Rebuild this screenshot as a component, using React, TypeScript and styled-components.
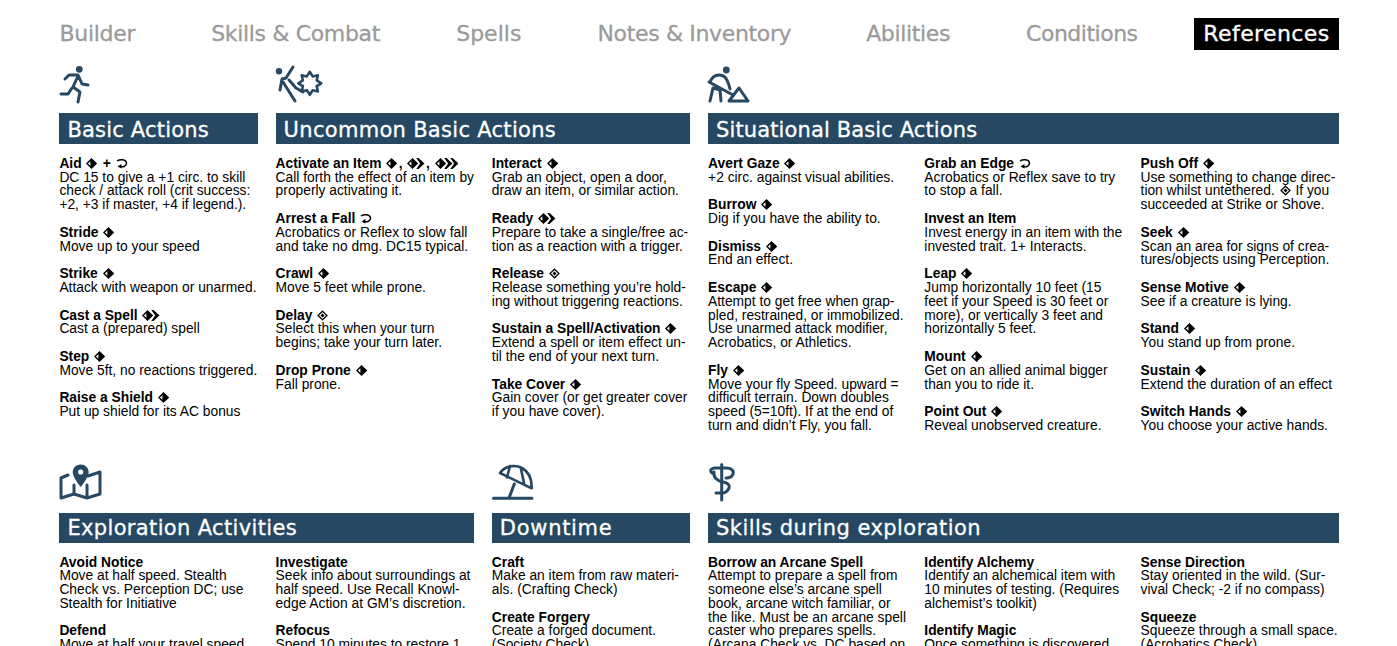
import React from 'react';
import styled, { createGlobalStyle } from 'styled-components';

const NAVY = '#264863';

const Global = createGlobalStyle`
  html, body { margin: 0; padding: 0; background: #fff; }
  body { height: 646px; overflow: hidden; font-family: "Liberation Sans", Arial, sans-serif; color: #000; }
`;

const Page = styled.div`
  width: 1279.6px;
  margin-left: 59.4px;
  padding-top: 18px;
`;

const Nav = styled.nav`
  display: flex;
  align-items: center;
  height: 32px;
  margin-bottom: 14px;
`;

const NavItem = styled.div<{ $active?: boolean; $w: number; $ls: number }>`
  box-sizing: border-box;
  flex: none;
  width: ${p => p.$w}px;
  height: 32px;
  margin-left: ${p => (p.$active ? 'auto' : '0')};
  margin-right: ${p => (p.$active ? '0' : '75.7px')};
  &:nth-last-child(2) { margin-right: 0; }
  line-height: 31px;
  text-align: center;
  white-space: nowrap;
  font-family: "DejaVu Sans", sans-serif;
  font-size: 22px;
  letter-spacing: ${p => p.$ls}px;
  -webkit-text-stroke: 0.3px currentColor;
  color: ${p => (p.$active ? '#fff' : '#9a9a9a')};
  background: ${p => (p.$active ? '#000' : 'transparent')};
`;

const Sheet = styled.div`
  display: grid;
  grid-template-columns: repeat(6, minmax(0, 1fr));
  column-gap: 17.8px;
`;

const Section = styled.section<{ $span: number; $height: number }>`
  grid-column: span ${p => p.$span};
  height: ${p => p.$height}px;
`;

const IconSlot = styled.div`
  height: 49px;
  svg { display: block; overflow: visible; }
`;

const Header = styled.h2<{ $tight?: boolean; $ls: number }>`
  margin: 0 0 ${p => (p.$tight ? 12.5 : 12.8)}px;
  height: ${p => (p.$tight ? 30 : 31)}px;
  padding-left: 8px;
  background: ${NAVY};
  color: #fff;
  font-family: "DejaVu Sans", sans-serif;
  font-weight: 400;
  font-size: 21px;
  line-height: ${p => (p.$tight ? 30 : 34)}px;
  letter-spacing: ${p => p.$ls}px;
  -webkit-text-stroke: 0.3px currentColor;
  white-space: nowrap;
`;

const Columns = styled.div<{ $n: number }>`
  display: grid;
  grid-template-columns: repeat(${p => p.$n}, minmax(0, 1fr));
  column-gap: 17.8px;
`;

const Entry = styled.div`
  margin-bottom: 13.8px;
  font-size: 13.8px;
  line-height: 13.8px;
  white-space: pre;
`;

const Title = styled.div`
  font-weight: 700;
`;

const Glyph = styled.svg`
  display: inline-block;
  height: 11px;
  vertical-align: -1px;
  margin: 0 1px;
`;

const Art = styled.svg.attrs({ width: 50, height: 49, fill: 'none' })`
  stroke: ${NAVY};
  stroke-width: 3;
  stroke-linecap: round;
  stroke-linejoin: round;
`;

const Head = styled.circle`
  fill: ${NAVY};
  stroke: none;
`;

const starPoints = Array.from({ length: 16 }, (_, i) => {
  const r = i % 2 === 0 ? 11.5 : 7.5;
  const a = (i * Math.PI) / 8 - Math.PI / 2;
  return `${(39.8 + r * Math.cos(a)).toFixed(1)},${(23.3 + r * Math.sin(a)).toFixed(1)}`;
}).join(' ');

const Runner = () => (
  <Art viewBox="9 4 50 49">
    <Head cx="29.3" cy="9.3" r="3.4" />
    <path d="M15 19l4-4h9l4 9 6 1M28 16l-5 11 7 5-2 10M11 34h7l4-6" />
  </Art>
);
const Kick = () => (
  <Art viewBox="6 4 50 49">
    <Head cx="9" cy="11.3" r="3.2" />
    <path d="M23 7l-7 11-4 1-2 11M13 22l12 19M19 20l7 8 7 4" />
    <polygon strokeWidth="2.6" points={starPoints} />
  </Art>
);
const Shovel = () => (
  <Art viewBox="8 4 50 49">
    <Head cx="26.3" cy="10" r="3.4" />
    <path d="M10 22c2-5 5-7 9-7 5 0 8 2 11 14M9 22l24 13M10 41l3-13 7 2 1 11" />
    <path d="M39 28l9 13H29z" />
  </Art>
);
const MapPin = () => (
  <Art viewBox="9 9 50 49">
    <path d="M18 20l-7 3v20l13-4 13 4 13-4V17l-12 4M24 30v9M37 30v13" />
    <path fill={NAVY} stroke="none" d="M30.700 9.500c-4.500 0-8 3.400-8 7.700 0 5 8 14.800 8 14.800s8-9.800 8-14.800c0-4.300-3.500-7.700-8-7.700z" />
    <circle cx="30.700" cy="17" r="2.600" fill="#fff" stroke="none" />
  </Art>
);
const Umbrella = () => (
  <Art viewBox="7 9 50 49">
    <path d="M8.500 43.300h38.500M29.300 29L24 43" />
    <path d="M15 18c5-7 15-9 22-5s10 12 9.700 20.300zM25 11l-3 11.500M36 14l3 14" strokeWidth="2.600" />
  </Art>
);
const Caduceus = () => (
  <Art viewBox="8 9 50 49">
    <path d="M21.700 9.500V45" />
    <path d="M12 18c-3-3 0-5 3-5h11c6 0 8 3 7 6s-4 4-7 4" />
    <path d="M14 17c-1 5 3 9 9 10 5 1 7 3 6 6-1 3-4 5-6 5h-7" />
  </Art>
);

const A = ({ n }: { n: number }) => (
  <Glyph viewBox={`0 0 ${10.5 + (n - 1) * 5.5} 10`} style={{ width: 11.5 + (n - 1) * 6 }}>
    <path d="M5 0l5.200 5-5.200 5-5-5z" />
    <path d="M1.800 5L4 3v4z" fill="#fff" />
    {n > 1 && <path d="M8 0h2l5.500 5-5.500 5H8l3.500-5z" transform="translate(0.5 0)" />}
    {n > 2 && <path d="M8 0h2l5.500 5-5.500 5H8l3.500-5z" transform="translate(6 0)" />}
  </Glyph>
);
const R = () => (
  <Glyph viewBox="0 0 12 10" style={{ width: 12 }}>
    <path d="M1 2.500C4 .5 10 .5 10.500 4.500 10.800 7.500 7 9 4 8" fill="none" stroke="#000" strokeWidth="1.500" />
    <path d="M5.500 5.500L1.500 8l4 2z" />
  </Glyph>
);
const F = () => (
  <Glyph viewBox="0 0 11 10" style={{ width: 11 }}>
    <path d="M5.500.7L10 5 5.500 9.300 1 5z" fill="none" stroke="#000" strokeWidth="1.200" />
    <path d="M5.500 3L7.500 5 5.500 7 3.500 5z" />
  </Glyph>
);

const renderRich = (t: string) =>
  t.split(/(\{[123rf]\})/).map((part, i) => {
    if (part === '{1}') return <A key={i} n={1} />;
    if (part === '{2}') return <A key={i} n={2} />;
    if (part === '{3}') return <A key={i} n={3} />;
    if (part === '{r}') return <R key={i} />;
    if (part === '{f}') return <F key={i} />;
    return <React.Fragment key={i}>{part}</React.Fragment>;
  });

type Item = [string, string];

const Block = ({ items }: { items: Item[] }) => (
  <div>
    {items.map(([t, d]) => (
      <Entry key={t}>
        <Title>{renderRich(t)}</Title>
        {renderRich(d)}
      </Entry>
    ))}
  </div>
);

const navItems: [string, number, number][] = [
  ['Builder', 76, -0.3],
  ['Skills & Combat', 169, -0.35],
  ['Spells', 66, 0],
  ['Notes & Inventory', 193, -0.35],
  ['Abilities', 84, -0.35],
  ['Conditions', 112, -0.5],
];

const basic: Item[] = [
  ['Aid {1} + {r}', 'DC 15 to give a +1 circ. to skill\ncheck / attack roll (crit success:\n+2, +3 if master, +4 if legend.).'],
  ['Stride {1}', 'Move up to your speed'],
  ['Strike {1}', 'Attack with weapon or unarmed.'],
  ['Cast a Spell {2}', 'Cast a (prepared) spell'],
  ['Step {1}', 'Move 5ft, no reactions triggered.'],
  ['Raise a Shield {1}', 'Put up shield for its AC bonus'],
];
const unc1: Item[] = [
  ['Activate an Item {1}, {2}, {3}', 'Call forth the effect of an item by\nproperly activating it.'],
  ['Arrest a Fall {r}', 'Acrobatics or Reflex to slow fall\nand take no dmg. DC15 typical.'],
  ['Crawl {1}', 'Move 5 feet while prone.'],
  ['Delay {f}', 'Select this when your turn\nbegins; take your turn later.'],
  ['Drop Prone {1}', 'Fall prone.'],
];
const unc2: Item[] = [
  ['Interact {1}', 'Grab an object, open a door,\ndraw an item, or similar action.'],
  ['Ready {2}', 'Prepare to take a single/free ac-\ntion as a reaction with a trigger.'],
  ['Release {f}', 'Release something you’re hold-\ning without triggering reactions.'],
  ['Sustain a Spell/Activation {1}', 'Extend a spell or item effect un-\ntil the end of your next turn.'],
  ['Take Cover {1}', 'Gain cover (or get greater cover\nif you have cover).'],
];
const sit1: Item[] = [
  ['Avert Gaze {1}', '+2 circ. against visual abilities.'],
  ['Burrow {1}', 'Dig if you have the ability to.'],
  ['Dismiss {1}', 'End an effect.'],
  ['Escape {1}', 'Attempt to get free when grap-\npled, restrained, or immobilized.\nUse unarmed attack modifier,\nAcrobatics, or Athletics.'],
  ['Fly {1}', 'Move your fly Speed. upward =\ndifficult terrain. Down doubles\nspeed (5=10ft). If at the end of\nturn and didn’t Fly, you fall.'],
];
const sit2: Item[] = [
  ['Grab an Edge {r}', 'Acrobatics or Reflex save to try\nto stop a fall.'],
  ['Invest an Item', 'Invest energy in an item with the\ninvested trait. 1+ Interacts.'],
  ['Leap {1}', 'Jump horizontally 10 feet (15\nfeet if your Speed is 30 feet or\nmore), or vertically 3 feet and\nhorizontally 5 feet.'],
  ['Mount {1}', 'Get on an allied animal bigger\nthan you to ride it.'],
  ['Point Out {1}', 'Reveal unobserved creature.'],
];
const sit3: Item[] = [
  ['Push Off {1}', 'Use something to change direc-\ntion whilst untethered. {f} If you\nsucceeded at Strike or Shove.'],
  ['Seek {1}', 'Scan an area for signs of crea-\ntures/objects using Perception.'],
  ['Sense Motive {1}', 'See if a creature is lying.'],
  ['Stand {1}', 'You stand up from prone.'],
  ['Sustain {1}', 'Extend the duration of an effect'],
  ['Switch Hands {1}', 'You choose your active hands.'],
];
const exp1: Item[] = [
  ['Avoid Notice', 'Move at half speed. Stealth\nCheck vs. Perception DC; use\nStealth for Initiative'],
  ['Defend', 'Move at half your travel speed'],
];
const exp2: Item[] = [
  ['Investigate', 'Seek info about surroundings at\nhalf speed. Use Recall Knowl-\nedge Action at GM’s discretion.'],
  ['Refocus', 'Spend 10 minutes to restore 1'],
];
const down: Item[] = [
  ['Craft', 'Make an item from raw materi-\nals. (Crafting Check)'],
  ['Create Forgery', 'Create a forged document.\n(Society Check)'],
];
const sk1: Item[] = [
  ['Borrow an Arcane Spell', 'Attempt to prepare a spell from\nsomeone else’s arcane spell\nbook, arcane witch familiar, or\nthe like. Must be an arcane spell\ncaster who prepares spells.\n(Arcana Check vs. DC based on'],
];
const sk2: Item[] = [
  ['Identify Alchemy', 'Identify an alchemical item with\n10 minutes of testing. (Requires\nalchemist’s toolkit)'],
  ['Identify Magic', 'Once something is discovered'],
];
const sk3: Item[] = [
  ['Sense Direction', 'Stay oriented in the wild. (Sur-\nvival Check; -2 if no compass)'],
  ['Squeeze', 'Squeeze through a small space.\n(Acrobatics Check)'],
];

export default function App() {
  return (
    <>
      <Global />
      <Page>
        <Nav>
          {navItems.map(([label, w, ls]) => (
            <NavItem key={label} $w={w} $ls={ls}>{label}</NavItem>
          ))}
          <NavItem $active $w={145} $ls={0.4}>References</NavItem>
        </Nav>
        <Sheet>
          <Section $span={1} $height={400}>
            <IconSlot><Runner /></IconSlot>
            <Header $ls={0.2}>Basic Actions</Header>
            <Block items={basic} />
          </Section>
          <Section $span={2} $height={400}>
            <IconSlot><Kick /></IconSlot>
            <Header $ls={0.3}>Uncommon Basic Actions</Header>
            <Columns $n={2}>
              <Block items={unc1} />
              <Block items={unc2} />
            </Columns>
          </Section>
          <Section $span={3} $height={400}>
            <IconSlot><Shovel /></IconSlot>
            <Header $ls={0.12}>Situational Basic Actions</Header>
            <Columns $n={3}>
              <Block items={sit1} />
              <Block items={sit2} />
              <Block items={sit3} />
            </Columns>
          </Section>
          <Section $span={2} $height={182}>
            <IconSlot><MapPin /></IconSlot>
            <Header $tight $ls={0.35}>Exploration Activities</Header>
            <Columns $n={2}>
              <Block items={exp1} />
              <Block items={exp2} />
            </Columns>
          </Section>
          <Section $span={1} $height={182}>
            <IconSlot><Umbrella /></IconSlot>
            <Header $tight $ls={0.7}>Downtime</Header>
            <Block items={down} />
          </Section>
          <Section $span={3} $height={182}>
            <IconSlot><Caduceus /></IconSlot>
            <Header $tight $ls={0.45}>Skills during exploration</Header>
            <Columns $n={3}>
              <Block items={sk1} />
              <Block items={sk2} />
              <Block items={sk3} />
            </Columns>
          </Section>
        </Sheet>
      </Page>
    </>
  );
}
